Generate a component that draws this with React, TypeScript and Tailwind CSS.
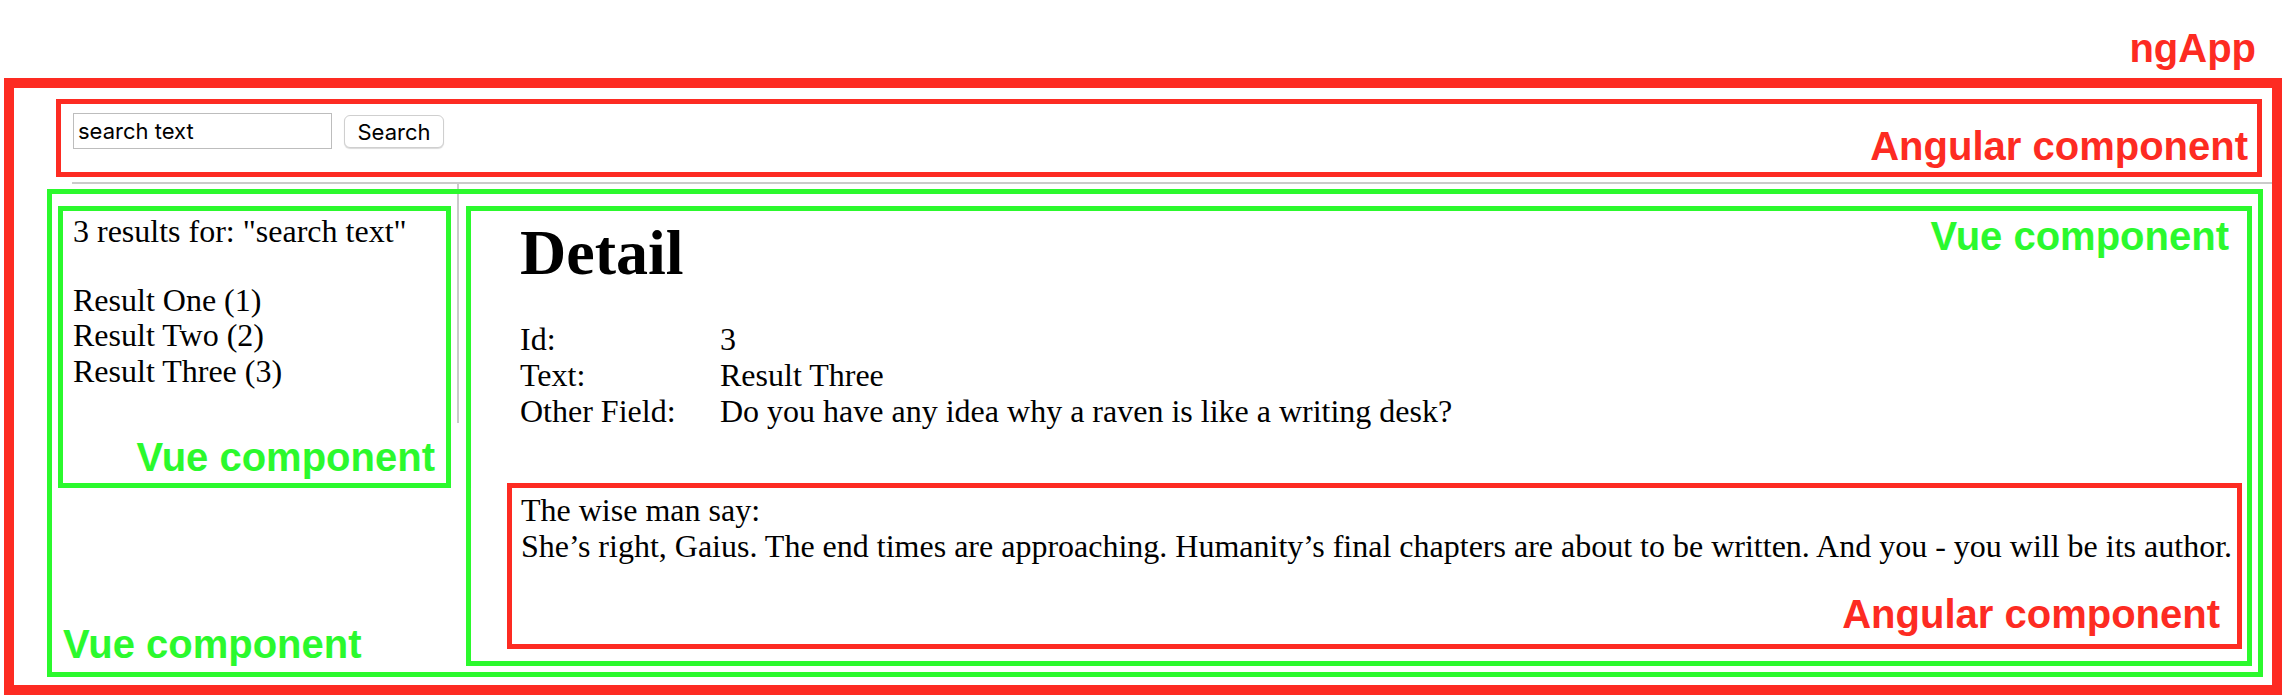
const red = 'border-[#fd2b22]'

function Label({ children, color }: { children: string; color: 'red' | 'green' }) {
  return (
    <div
      className={`font-['Liberation_Sans',Arial,sans-serif] font-bold text-[40px] leading-[40px] whitespace-nowrap ${
        color === 'red' ? 'text-[#fd2b22]' : 'text-[#2bf92d]'
      }`}
    >
      {children}
    </div>
  )
}

function SearchBar() {
  return (
    <div className={`ml-[42px] mt-[11px] w-[2206px] h-[78px] border-[5px] ${red} flex justify-between`}>
      <div className="flex items-center gap-[12px] self-start pt-[9px] pl-[12px] font-['Inter',sans-serif] text-[22px] text-black">
        <input
          readOnly
          value="search text"
          className="w-[259px] h-[36px] border border-[#bdbdbd] px-[4px] outline-none"
        />
        <button className="w-[100px] h-[33px] bg-white border border-[#cfcfcf] rounded-[6px] shadow-[0_1px_1px_rgba(0,0,0,0.15)]">
          Search
        </button>
      </div>
      <div className="self-end pb-[6px] pr-[9px]">
        <Label color="red">Angular component</Label>
      </div>
    </div>
  )
}

function Results() {
  return (
    <div className="w-[393px] h-[282px] border-[5px] border-[#2bf92d] flex flex-col justify-between">
      <div className="pl-[10px] pt-[3px] text-[32px] leading-[35.5px]">
        <div className="mb-[33px]">3 results for: "search text"</div>
        <div>Result One (1)</div>
        <div>Result Two (2)</div>
        <div>Result Three (3)</div>
      </div>
      <div className="self-end pr-[11px] pb-[6px]">
        <Label color="green">Vue component</Label>
      </div>
    </div>
  )
}

function Detail() {
  return (
    <div className="w-[1786px] h-[460px] border-[5px] border-[#2bf92d] flex flex-col">
      <div className="flex justify-between items-start pl-[49px] pr-[18px]">
        <h1 className="mt-[10px] text-[64px] leading-[64px] font-bold">Detail</h1>
        <div className="mt-[5px]">
          <Label color="green">Vue component</Label>
        </div>
      </div>
      <div className="mt-[36px] pl-[49px] grid grid-cols-[200px_1fr] text-[32px] leading-[36px]">
        <div>Id:</div>
        <div>3</div>
        <div>Text:</div>
        <div>Result Three</div>
        <div>Other Field:</div>
        <div>Do you have any idea why a raven is like a writing desk?</div>
      </div>
      <div className={`mt-[54px] ml-[36px] w-[1735px] h-[166px] border-[5px] ${red} flex flex-col justify-between`}>
        <div className="pl-[9px] pt-[5px] text-[32px] leading-[35.5px] whitespace-nowrap">
          <div>The wise man say:</div>
          <div>
            She’s right, Gaius. The end times are approaching. Humanity’s final chapters are about to be written. And
            you - you will be its author.
          </div>
        </div>
        <div className="self-end pr-[17px] pb-[10px]">
          <Label color="red">Angular component</Label>
        </div>
      </div>
    </div>
  )
}

export default function App() {
  return (
    <div className="relative z-0 w-[2284px] h-[698px] bg-white text-black font-['Liberation_Serif','Times_New_Roman',serif] overflow-hidden">
      <div className="h-[78px] pt-[28px] pr-[28px] flex justify-end">
        <Label color="red">ngApp</Label>
      </div>

      <div className={`relative ml-[4px] w-[2278px] h-[617px] border-[10px] ${red}`}>
        {/* page chrome lines underneath the component outlines */}
        <div className="absolute -z-10 left-[443px] top-[95px] w-[2px] h-[240px] bg-[#cacaca]" />

        <SearchBar />

        <div className="mt-[5px] ml-[58px] h-[2px] bg-[#cacaca]" />

        <div className="mt-[5px] ml-[33px] w-[2216px] h-[488px] border-[5px] border-[#2bf92d] flex pl-[6px] pt-[12px] pr-[6px] pb-[6px] gap-[15px]">
          <div className="w-[393px] flex flex-col justify-between">
            <Results />
            <div className="ml-[5px] mb-[2px]">
              <Label color="green">Vue component</Label>
            </div>
          </div>
          <Detail />
        </div>
      </div>
    </div>
  )
}
